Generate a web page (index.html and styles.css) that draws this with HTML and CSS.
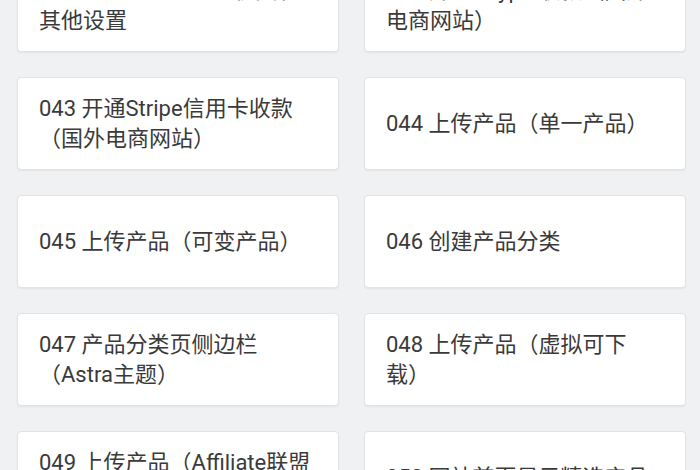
FILE: index.html
```html
<!DOCTYPE html>
<html lang="zh-CN">
<head>
	<meta charset="utf-8">
	<title>课程目录</title>
	<link rel="stylesheet" href="styles.css">
</head>
<body>
	<div class="lessons">
		<a class="lesson" href="#">041 WooCommerce税费和其他设置</a>
		<a class="lesson" href="#">042 开通Paypal收款（国外电商网站）</a>
		<a class="lesson" href="#">043 开通Stripe信用卡收款（国外电商网站）</a>
		<a class="lesson" href="#">044 上传产品（单一产品）</a>
		<a class="lesson" href="#">045 上传产品（可变产品）</a>
		<a class="lesson" href="#">046 创建产品分类</a>
		<a class="lesson" href="#">047 产品分类页侧边栏（Astra主题）</a>
		<a class="lesson" href="#">048 上传产品（虚拟可下载）</a>
		<a class="lesson" href="#">049 上传产品（Affiliate联盟产品）</a>
		<a class="lesson" href="#">050 网站首页显示精选产品</a>
	</div>
</body>
</html>
```

FILE: styles.css
```css
html, body {
	margin: 0;
	background-color: #f0f1f3;
}

body {
	font-family: Roboto, "Noto Sans CJK SC", sans-serif;
	font-size: 22px;
	color: #3a3a3a;
	overflow: hidden;
}

.lessons {
	display: grid;
	grid-template-columns: 322px 322px;
	column-gap: 25px;
	row-gap: 25px;
	padding-left: 17px;
	margin-top: -41px;
}

.lesson {
	display: flex;
	align-items: center;
	box-sizing: border-box;
	height: 93px;
	padding: 0 27px 0 21px;
	background-color: #fff;
	border: 1px solid #e2e3e5;
	border-radius: 4px;
	box-shadow: 0 1px 2px rgba(0, 0, 0, 0.06);
	color: inherit;
	text-decoration: none;
	line-height: 30px;
}
```
